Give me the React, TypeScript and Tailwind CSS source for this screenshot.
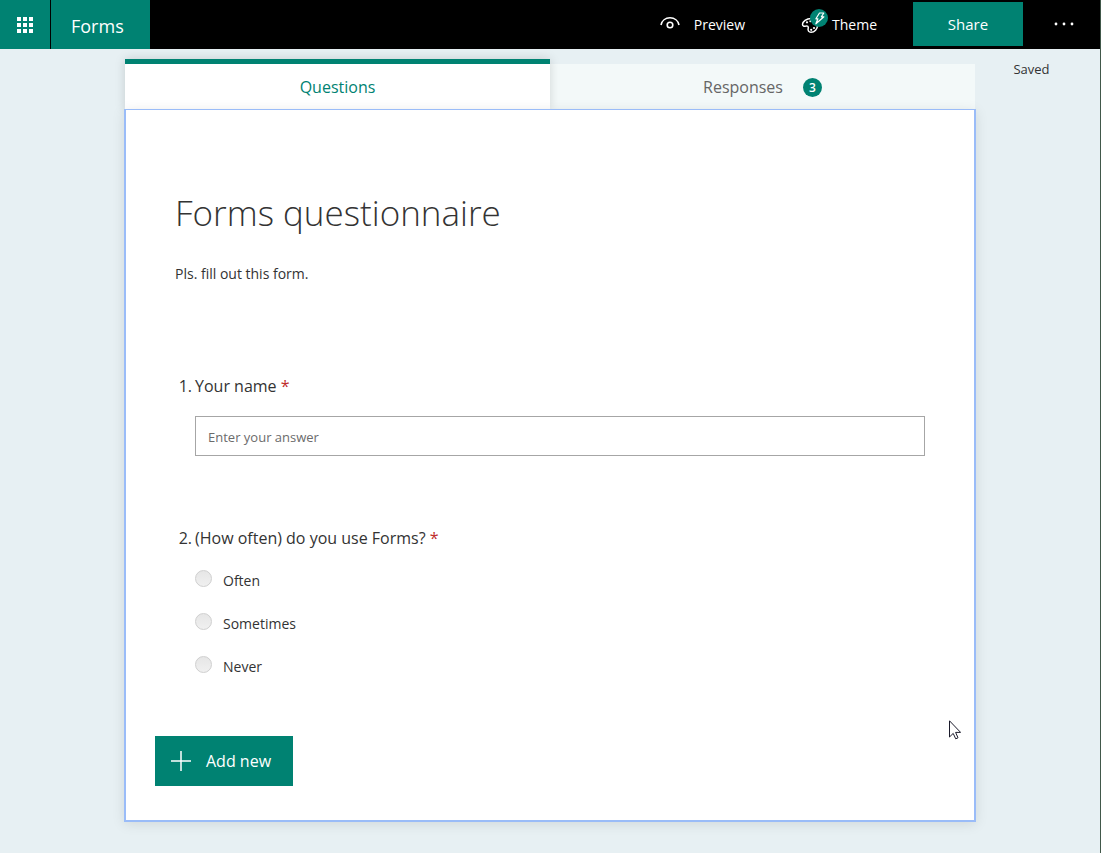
import { useState } from 'react';

interface Question {
  id: string;
  title: string;
  choices?: string[];
}

const questions: Question[] = [
  { id: 'name', title: 'Your name' },
  { id: 'usage', title: '(How often) do you use Forms?', choices: ['Often', 'Sometimes', 'Never'] },
];

function WaffleIcon() {
  return (
    <svg className="w-4 h-4" viewBox="0 0 16 16" fill="currentColor" shapeRendering="crispEdges">
      {[0, 6, 12].map(y => [0, 6, 12].map(x => (
        <rect key={`${x}-${y}`} x={x} y={y} width="4" height="4" />
      )))}
    </svg>
  );
}

function EyeIcon() {
  return (
    <svg className="w-5 h-5" viewBox="0 0 20 20" fill="none" stroke="currentColor" strokeWidth="1.6">
      <path d="M1 10C1.800 5.700 5.500 2.800 10 2.800s8.200 2.900 9 7.200" />
      <circle cx="10" cy="10" r="2.800" />
    </svg>
  );
}

function ThemeIcon() {
  return (
    <svg className="w-7 h-8" viewBox="0 0 28 32" fill="none">
      {/* palette */}
      <path
        d="M11 9.500C6.500 9.500 2.500 12.500 2.500 15.300c0 1.900 1.700 2.400 3.200 1.800 1.700-.6 3 .4 2.500 2.200-.6 2.200.6 4 2.800 4 3.500 0 6.500-3.300 6.500-6.800 0-4-3-7-6.500-7z"
        stroke="white"
        strokeWidth="1.500"
      />
      <circle cx="7" cy="13.300" r="1.100" fill="white" />
      <circle cx="10.300" cy="12.200" r="1" fill="white" />
      <circle cx="14" cy="19" r="1.100" fill="white" />
      <circle cx="11.200" cy="20.800" r="1.100" fill="white" />
      {/* lightning badge */}
      <circle cx="19" cy="9" r="9" fill="#008272" />
      <path d="M19.500 4h4.300l-2.400 3.800h2.500l-8 7 2-5h-2z" stroke="white" strokeWidth="1.200" strokeLinejoin="round" />
    </svg>
  );
}

function Header() {
  return (
    <header className="flex h-[49px] bg-black text-white">
      <button aria-label="App launcher" className="w-[50px] flex items-center justify-center bg-[#008272]">
        <WaffleIcon />
      </button>
      <a href="#" className="ml-px w-[99px] pl-5 pt-0.5 flex items-center bg-[#008272] text-lg">Forms</a>

      <div className="ml-auto flex items-center text-sm">
        <button className="flex items-center gap-[14px] mr-[55px]">
          <EyeIcon />
          Preview
        </button>
        <button className="flex items-center gap-1 mr-9">
          <ThemeIcon />
          Theme
        </button>
        <button className="w-[110px] h-11 mb-px pt-0.5 bg-[#008272] text-[15px]">Share</button>
        <button aria-label="More options" className="w-[77px] h-full pb-0.5 pl-1 flex items-center justify-center">
          <svg className="w-5 h-1" viewBox="0 0 20 4" fill="currentColor">
            <circle cx="2" cy="2" r="1.400" />
            <circle cx="10" cy="2" r="1.400" />
            <circle cx="18" cy="2" r="1.400" />
          </svg>
        </button>
      </div>
    </header>
  );
}

function QuestionBlock({ question, number }: { question: Question; number: number }) {
  const label = (
    <>
      <span className="w-5 pr-[3px] -ml-5 inline-block text-right whitespace-nowrap">{number}.</span>
      {question.title} <span className="text-[#c02c2c]">*</span>
    </>
  );

  if (question.choices) {
    return (
      <fieldset className="pl-5">
        <legend className="text-base text-[#333333]">{label}</legend>
        <div className="mt-5 flex flex-col gap-[19px]">
          {question.choices.map(choice => (
            <label key={choice} className="flex items-start gap-[11px] h-6 text-sm text-[#333333]">
              <input
                type="radio"
                name={question.id}
                className="appearance-none w-[17px] h-[17px] rounded-full border border-[#cfcfcf] bg-linear-to-b from-[#e6e6e6] to-[#f0f0f0] checked:from-[#008272] checked:to-[#008272]"
              />
              <span className="pt-px">{choice}</span>
            </label>
          ))}
        </div>
      </fieldset>
    );
  }

  return (
    <div className="pl-5">
      <label htmlFor={question.id} className="block text-base text-[#333333]">{label}</label>
      <input
        id={question.id}
        type="text"
        placeholder="Enter your answer"
        className="mt-[18px] w-full h-10 px-3 pt-0.5 border border-[#a6a6a6] text-[13px] placeholder:text-[#6b6b6b]"
      />
    </div>
  );
}

export default function App() {
  const [tab, setTab] = useState('questions');

  return (
    <div className="min-h-screen bg-[#e7f0f3] border-r border-[#41584a] font-['Open_Sans','Noto_Sans',sans-serif]">
      <Header />

      <div className="grid grid-cols-[1fr_minmax(0,850px)_1fr] pb-8">
        <main className="col-start-2 pt-[10px]">
          <div role="tablist" className="flex items-end">
            <button
              role="tab"
              aria-selected={tab === 'questions'}
              onClick={() => setTab('questions')}
              className="relative w-1/2 h-[50px] border-t-[5px] border-[#008272] bg-white text-base text-[#008272] shadow-[0_0_10px_rgba(0,0,0,0.15)]"
            >
              Questions
            </button>
            <button
              role="tab"
              aria-selected={tab === 'responses'}
              onClick={() => setTab('responses')}
              className="w-1/2 h-[45px] flex items-center justify-center gap-5 bg-[#f3f9f9] text-base text-[#666666]"
            >
              Responses
              <span className="w-[19px] h-[19px] mt-0.5 rounded-full flex items-center justify-center bg-[#008272] text-white text-xs font-semibold">3</span>
            </button>
          </div>

          <form className="relative -mx-px border-2 border-t border-[#9abcf8] bg-white px-[49px] pt-20 pb-[34px] shadow-[0_2px_12px_rgba(0,0,0,0.1)]">
            <h1 className="text-[35px] leading-[46px] font-light text-[#333333]">Forms questionnaire</h1>
            <p className="mt-7 text-sm text-[#333333]">Pls. fill out this form.</p>

            <div className="mt-[90px] flex flex-col gap-[70px]">
              {questions.map((question, i) => (
                <QuestionBlock key={question.id} question={question} number={i + 1} />
              ))}
            </div>

            <button type="button" className="mt-14 -ml-5 h-[50px] px-4 flex items-center gap-[15px] bg-[#008272] text-white text-base">
              <svg className="w-5 h-5" viewBox="0 0 20 20" fill="none" stroke="currentColor" strokeWidth="1.500">
                <path d="M10 0v20M0 10h20" />
              </svg>
              <span className="pr-1.5">Add new</span>
            </button>

            {/* mouse pointer */}
            <svg className="absolute right-[13px] bottom-20 w-3 h-5" viewBox="0 0 12 20" fill="white" stroke="#1a1a2a" strokeWidth="1">
              <path d="M.5.8v16.200l3.700-3.600 2.500 5.400 2.300-1-2.400-5.400h5z" />
            </svg>
          </form>
        </main>

        <p className="pt-[11px] text-[13px] leading-[18px] text-center pr-3 text-[#333333]">Saved</p>
      </div>
    </div>
  );
}
